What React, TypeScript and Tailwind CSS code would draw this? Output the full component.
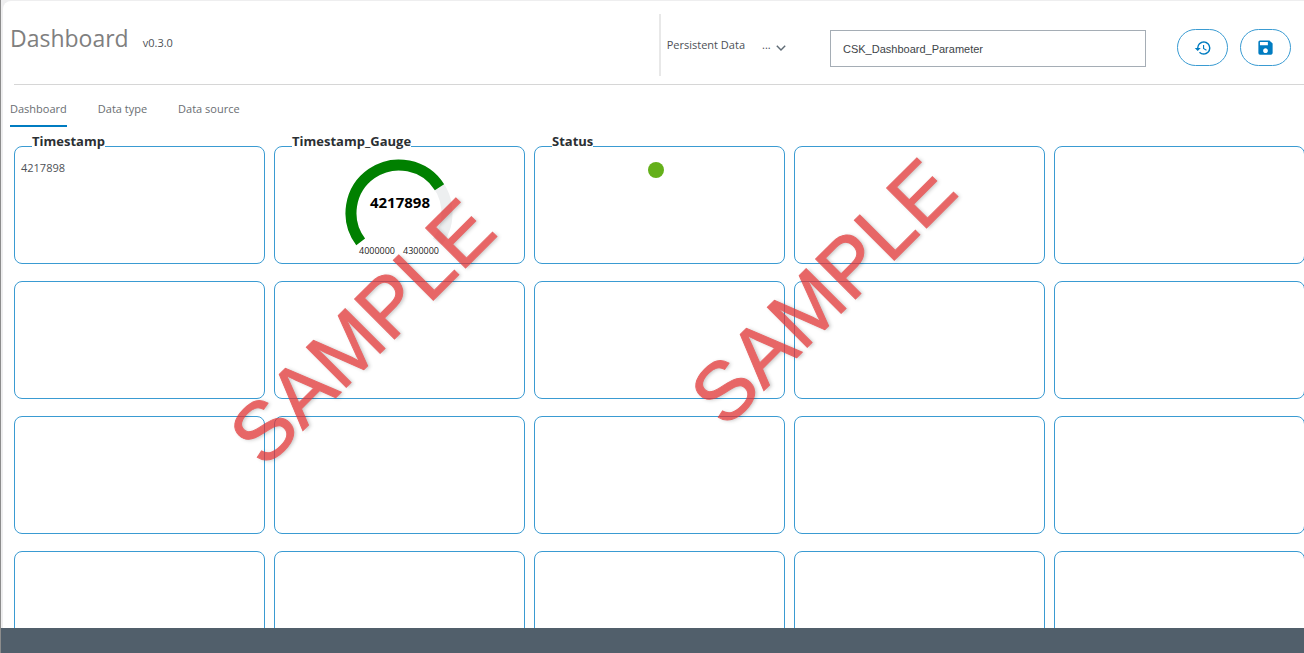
import { useState } from "react";
import type { ReactNode } from "react";
import { MdHistory, MdSave } from "react-icons/md";

const MIN = 4000000;
const MAX = 4300000;
const VALUE = 4217898;

const START = 217;
const SWEEP = 254;
const CX = 60;
const CY = 56;
const RADIUS = 48;

function point(deg: number) {
  const rad = (deg * Math.PI) / 180;
  return `${(CX + RADIUS * Math.cos(rad)).toFixed(2)} ${(CY - RADIUS * Math.sin(rad)).toFixed(2)}`;
}

function arc(fraction: number) {
  const sweep = SWEEP * fraction;
  return `M ${point(START)} A ${RADIUS} ${RADIUS} 0 ${sweep > 180 ? 1 : 0} 1 ${point(START - sweep)}`;
}

function Gauge() {
  return (
    <svg viewBox="0 0 120 106" className="block h-[106px] w-[120px]" role="img" aria-label="Timestamp gauge">
      <path d={arc(1)} fill="none" stroke="#edeff0" strokeWidth="11" />
      <path d={arc((VALUE - MIN) / (MAX - MIN))} fill="none" stroke="#008000" strokeWidth="11" />
      <text x={CX + 1} y={CY - 5} textAnchor="middle" className="fill-black text-[15px] font-bold">
        {VALUE}
      </text>
      <text x={CX - 22} y={CY + 41} textAnchor="middle" className="fill-[#222222] text-[9px]">
        {MIN}
      </text>
      <text x={CX + 22} y={CY + 41} textAnchor="middle" className="fill-[#222222] text-[9px]">
        {MAX}
      </text>
    </svg>
  );
}

function Card({ title, children }: { title?: string; children?: ReactNode }) {
  return (
    <section className="h-[118px] rounded-[8px] border border-[#3a9bd2]">
      {title && (
        <h2 className="-mt-[13px] ml-[17px] w-fit bg-white text-[13px] leading-[14px] font-bold text-[#2b2f33]">
          {title}
        </h2>
      )}
      {children}
    </section>
  );
}

const tabs = ["Dashboard", "Data type", "Data source"];

const watermark =
  "pointer-events-none absolute -translate-x-1/2 -translate-y-1/2 -rotate-45 font-['Liberation_Sans',Arial,sans-serif] text-[82px] leading-none text-[#e03434] opacity-75 select-none [-webkit-text-stroke:1px_#e03434] [text-shadow:1px_2px_4px_rgba(0,0,0,0.3)]";

export default function App() {
  const [active, setActive] = useState(tabs[0]);
  const [name, setName] = useState("CSK_Dashboard_Parameter");

  return (
    <div className="relative flex h-screen flex-col overflow-hidden border-l border-[#8c8c8c] bg-[#eeeeef] font-['Open_Sans','Noto_Sans',sans-serif] text-[11px] text-[#4d5156]">
      <main className="mt-px ml-[2px] min-h-0 flex-1 overflow-hidden rounded-tl-[8px] bg-white">
        <header className="ml-[11px] flex h-[84px] items-start justify-between border-b border-[#d6d6d6] pt-[13px]">
          <div className="-ml-[4px] flex items-baseline gap-[14px] pt-[8px]">
            <h1 className="text-[23px] leading-[32px] text-[#7f7f7f]">Dashboard</h1>
            <span>v0.3.0</span>
          </div>
          <div className="flex h-[62px] items-center border-l-2 border-[#e8e8e8] pr-[13px] pl-[6px]">
            <label htmlFor="parameter-name">Persistent Data</label>
            <div className="relative ml-[17px] h-5 w-[26px]">
              <select aria-label="Persistent data options" className="h-full w-full appearance-none bg-transparent">
                <option>...</option>
              </select>
              <svg
                viewBox="0 0 10 6"
                className="pointer-events-none absolute top-[10px] right-[2px] h-[6px] w-[10px]"
                fill="none"
                stroke="#5f6b75"
                strokeWidth="1.4"
              >
                <path d="M0.8 0.7 5 5 9.2 0.7" />
              </svg>
            </div>
            <div className="ml-[42px] flex items-start pt-[6px]">
              <input
                id="parameter-name"
                value={name}
                onChange={(e) => setName(e.target.value)}
                className="mt-px h-[37px] w-[316px] border border-[#a5adb5] px-3 font-['Liberation_Sans',Arial,sans-serif] text-[11px] text-[#404448]"
              />
              <div className="ml-[31px] flex gap-3">
                <button
                  aria-label="Load"
                  className="flex h-[37px] w-[51px] items-center justify-center rounded-full border border-[#3a9bd2] text-[#007cc1]"
                >
                  <MdHistory size={18} />
                </button>
                <button
                  aria-label="Save"
                  className="flex h-[37px] w-[51px] items-center justify-center rounded-full border border-[#3a9bd2] text-[#007cc1]"
                >
                  <MdSave size={19} />
                </button>
              </div>
            </div>
          </div>
        </header>

        <nav className="ml-[7px] flex gap-[31px] pt-[9px]" role="tablist">
          {tabs.map((tab) => (
            <button
              key={tab}
              role="tab"
              aria-selected={tab === active}
              onClick={() => setActive(tab)}
              className={`h-[33px] border-b-2 text-[#6a6e72] ${tab === active ? "border-[#007cc1]" : "border-transparent"}`}
            >
              {tab}
            </button>
          ))}
        </nav>

        <div className="-mr-px ml-[11px] grid grid-cols-5 gap-x-[9px] gap-y-[17px] pt-[19px]">
          <Card title="Timestamp">
            <p className="px-[6px] pt-[12px] leading-[16px]">{VALUE}</p>
          </Card>
          <Card title="Timestamp_Gauge">
            <div className="flex justify-center pt-[9px] pr-[2px]">
              <Gauge />
            </div>
          </Card>
          <Card title="Status">
            <div className="flex justify-center pt-[14px] pr-[7px]">
              <span role="img" aria-label="Status OK" className="size-4 rounded-full bg-[#64b01a]" />
            </div>
          </Card>
          {Array.from({ length: 17 }, (_, i) => (
            <Card key={i} />
          ))}
        </div>
      </main>
      <footer className="h-[25px] shrink-0 bg-[#515f6b]" />

      <div className={`${watermark} top-[332px] left-[361px]`}>SAMPLE</div>
      <div className={`${watermark} top-[292px] left-[822px]`}>SAMPLE</div>
    </div>
  );
}
